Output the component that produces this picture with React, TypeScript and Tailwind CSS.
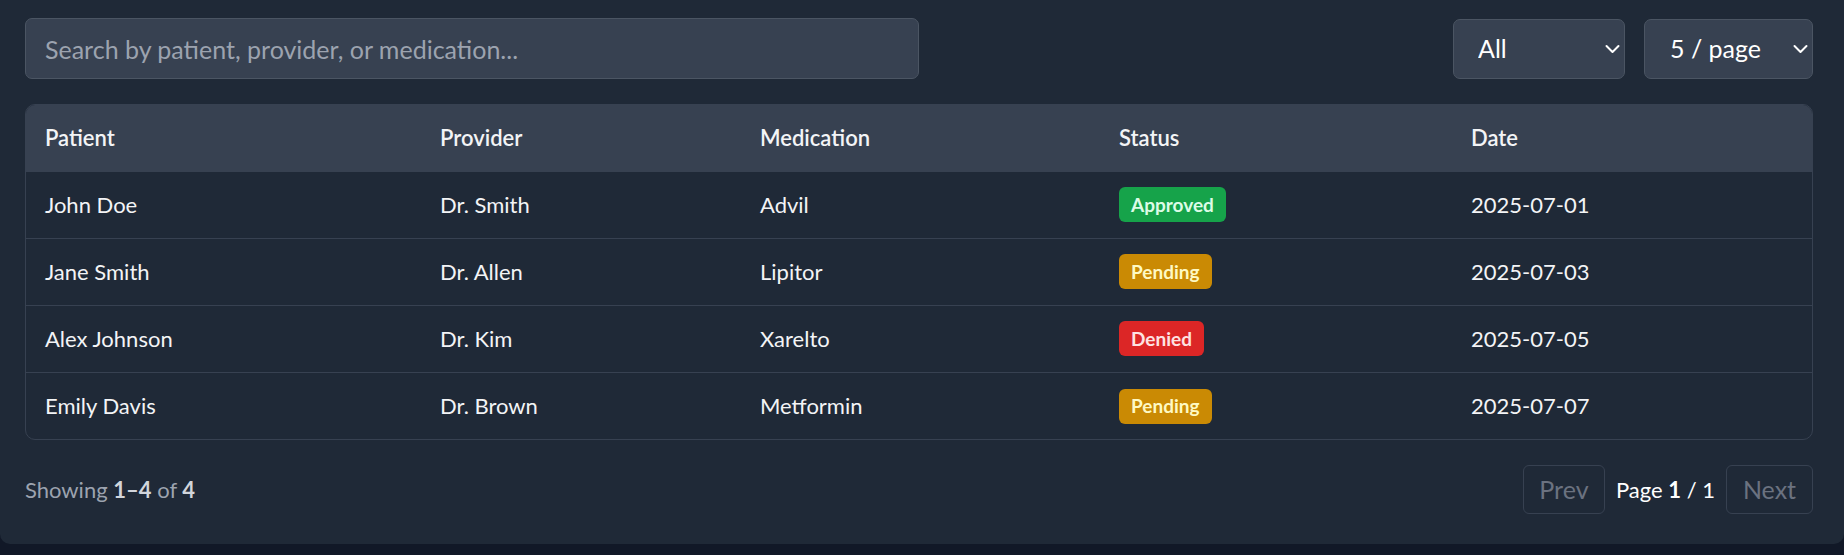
import { useState } from "react";

type Status = "Approved" | "Pending" | "Denied";

const rows: { patient: string; provider: string; medication: string; status: Status; date: string }[] = [
  { patient: "John Doe", provider: "Dr. Smith", medication: "Advil", status: "Approved", date: "2025-07-01" },
  { patient: "Jane Smith", provider: "Dr. Allen", medication: "Lipitor", status: "Pending", date: "2025-07-03" },
  { patient: "Alex Johnson", provider: "Dr. Kim", medication: "Xarelto", status: "Denied", date: "2025-07-05" },
  { patient: "Emily Davis", provider: "Dr. Brown", medication: "Metformin", status: "Pending", date: "2025-07-07" },
];

const badge: Record<Status, string> = {
  Approved: "bg-[#16a34a] text-[#dcfce7]",
  Pending: "bg-[#ca8a04] text-[#fef9c3]",
  Denied: "bg-[#dc2626] text-[#fee2e2]",
};

function Chevron() {
  return (
    <svg width="15" height="9" viewBox="0 0 15 9" fill="none" className="pointer-events-none absolute right-[5px] top-1/2 -translate-y-1/2">
      <path d="M1.5 1.5l6 6 6-6" stroke="#fff" strokeWidth="2" strokeLinecap="round" strokeLinejoin="round" />
    </svg>
  );
}

export default function App() {
  const [query, setQuery] = useState("");
  const [status, setStatus] = useState("All");
  const [perPage, setPerPage] = useState("5");

  return (
    <div className="min-h-screen bg-[#111827] font-['Lato','Noto_Sans',sans-serif]">
      <div className="bg-[#1f2937] rounded-b-[10px] pl-[25px] pr-[31px] pt-[18px] pb-[30px]">
        {/* toolbar */}
        <div className="flex items-center justify-between">
          <input
            value={query}
            onChange={(e) => setQuery(e.target.value)}
            placeholder="Search by patient, provider, or medication..."
            className="w-[894px] h-[61px] rounded-[7px] border border-[#4b5563] bg-[#374151] px-[19px] text-[25px] text-white placeholder:text-[#9ca3af] outline-none"
          />
          <div className="flex gap-[19px]">
            <div className="relative">
              <select
                value={status}
                onChange={(e) => setStatus(e.target.value)}
                className="appearance-none w-[172px] h-[60px] rounded-[7px] border border-[#4b5563] bg-[#374151] pl-[24px] text-[25px] text-white outline-none"
              >
                <option>All</option>
                <option>Approved</option>
                <option>Pending</option>
                <option>Denied</option>
              </select>
              <Chevron />
            </div>
            <div className="relative">
              <select
                value={perPage}
                onChange={(e) => setPerPage(e.target.value)}
                className="appearance-none w-[169px] h-[60px] rounded-[7px] border border-[#4b5563] bg-[#374151] pl-[25px] text-[25px] text-white outline-none"
              >
                <option value="5">5 / page</option>
                <option value="10">10 / page</option>
                <option value="20">20 / page</option>
              </select>
              <Chevron />
            </div>
          </div>
        </div>

        {/* table */}
        <div className="mt-[25px] overflow-hidden rounded-[10px] border border-[#374151]">
          <table className="w-full table-fixed border-collapse text-[22px]">
            <colgroup>
              <col className="w-[395px]" />
              <col className="w-[320px]" />
              <col className="w-[359px]" />
              <col className="w-[352px]" />
              <col />
            </colgroup>
            <thead>
              <tr className="h-[66px] bg-[#374151] text-left text-[#f3f4f6]">
                <th className="pl-[19px] font-semibold">Patient</th>
                <th className="pl-[19px] font-semibold">Provider</th>
                <th className="pl-[19px] font-semibold">Medication</th>
                <th className="pl-[19px] font-semibold">Status</th>
                <th className="pl-[19px] font-semibold">Date</th>
              </tr>
            </thead>
            <tbody className="text-[#f3f4f6]">
              {rows.map((r) => (
                <tr key={r.patient} className="h-[67px] border-t border-[#374151]">
                  <td className="pl-[19px]">{r.patient}</td>
                  <td className="pl-[19px]">{r.provider}</td>
                  <td className="pl-[19px]">{r.medication}</td>
                  <td className="pl-[19px]">
                    <span className={`inline-flex h-[35px] items-center rounded-[6px] px-[12px] text-[19px] font-bold ${badge[r.status]}`}>
                      {r.status}
                    </span>
                  </td>
                  <td className="pl-[19px]">{r.date}</td>
                </tr>
              ))}
            </tbody>
          </table>
        </div>

        {/* footer */}
        <div className="mt-[25px] flex items-center justify-between">
          <p className="text-[22px] text-[#9ca3af]">
            Showing <span className="font-bold text-[#d1d5db]">1–4</span> of <span className="font-bold text-[#d1d5db]">4</span>
          </p>
          <div className="flex items-center gap-[11px]">
            <button disabled className="h-[49px] w-[82px] rounded-[6px] border border-[#374151] text-[25px] text-[#6b7280]">
              Prev
            </button>
            <span className="text-[22px] text-white">
              Page <span className="font-bold">1</span> / 1
            </span>
            <button disabled className="h-[49px] w-[87px] rounded-[6px] border border-[#374151] text-[25px] text-[#6b7280]">
              Next
            </button>
          </div>
        </div>
      </div>
    </div>
  );
}
